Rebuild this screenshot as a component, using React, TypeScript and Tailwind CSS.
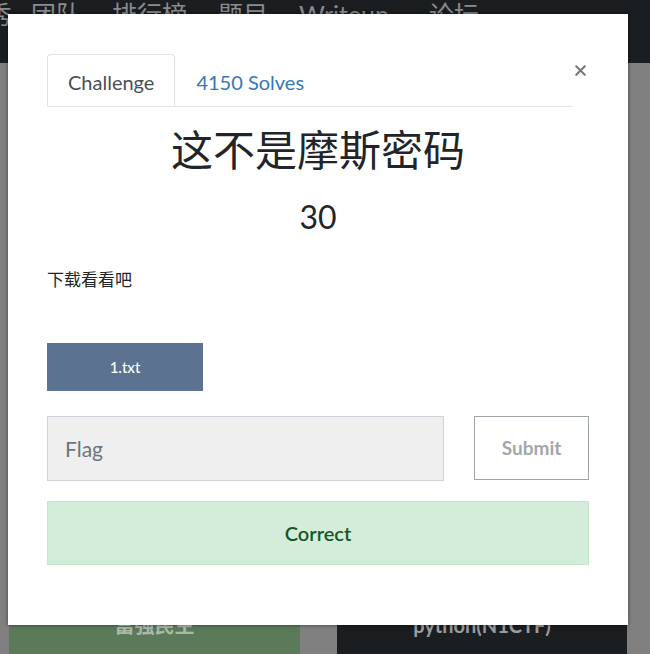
import { X } from "lucide-react";

const latin = "font-['Lato','Noto_Sans_CJK_SC',sans-serif]";

const navItems = ["团队", "排行榜", "题目", "Writeup", "论坛"];

function Background() {
  return (
    <div className="flex h-[654px] flex-col bg-[#808080]">
      <header className="flex h-[63px] shrink-0 gap-[31px] overflow-hidden bg-[#1b1e21] pt-[2px] text-[25px] leading-[25px] text-[#8a8c8f]">
        <span className="-ml-[38px] -mr-[12px]">新秀</span>
        {navItems.map((n) => (
          <span key={n} className={n === "Writeup" ? "mr-[9px]" : ""}>
            {n}
          </span>
        ))}
      </header>
      <div className="flex flex-1 items-end gap-[37px] pl-[9px] pr-[23px]">
        <div className="flex h-[120px] w-[291px] justify-center bg-[#5a7a5a] pt-[76px] text-[20px] font-bold text-[#aab8aa]">
          富强民主
        </div>
        <div className="flex h-[120px] w-[290px] justify-center bg-[#1b1e21] pt-[76px] text-[20px] font-bold text-[#9a9c9e]">
          python(N1CTF)
        </div>
      </div>
    </div>
  );
}

function Modal() {
  return (
    <div className="absolute left-[8px] top-[14px] flex h-[611px] w-[620px] flex-col bg-white px-[39px] pt-[40px] shadow-[0_0_4px_rgba(0,0,0,0.5)]">
      <div className="flex items-start">
        <ul className="flex flex-1 border-b border-[#dee2e6]">
          <li className="-mb-px flex h-[52px] items-center rounded-t-[4px] border border-[#dee2e6] border-b-white bg-white px-[20px] pt-[3px] text-[20px] text-[#495057]">
            Challenge
          </li>
          <li className="flex h-[52px] items-center border border-transparent px-[20px] pt-[3px] text-[20px] text-[#337ab7]">
            4150 Solves
          </li>
        </ul>
        <button type="button" className="mt-[6px] flex w-[17px] justify-center text-[#7a7a7a]">
          <X size={21} strokeWidth={3} />
        </button>
      </div>

      <h1 className="mt-[18px] text-center text-[42px] leading-[50px] text-[#212529]">这不是摩斯密码</h1>
      <div className="mt-[22px] text-center text-[32px] leading-[40px] text-[#212529]">30</div>

      <p className="mt-[31px] text-[17px] leading-[24px] text-[#212529]">下载看看吧</p>

      <button
        type="button"
        className="mt-[51px] h-[48px] w-[156px] bg-[#5b7290] text-[15px] font-medium text-white"
      >
        1.txt
      </button>

      <div className="mt-[25px] flex gap-[30px]">
        <div className="flex h-[65px] flex-1 items-center border border-[#ced4da] bg-[#efefef] pl-[17px] text-[21px] text-[#6c757d]">
          Flag
        </div>
        <button
          type="button"
          className="h-[64px] w-[115px] border border-[#9ea4aa] bg-white text-[19px] font-bold text-[#a3a7ab]"
        >
          Submit
        </button>
      </div>

      <div className="mt-[20px] flex h-[64px] items-center justify-center border border-[#c3e6cb] bg-[#d4edda] text-[20px] font-semibold text-[#155724]">
        Correct
      </div>
    </div>
  );
}

export default function App() {
  return (
    <div className={`relative h-[654px] w-[650px] overflow-hidden ${latin}`}>
      <Background />
      <Modal />
    </div>
  );
}
